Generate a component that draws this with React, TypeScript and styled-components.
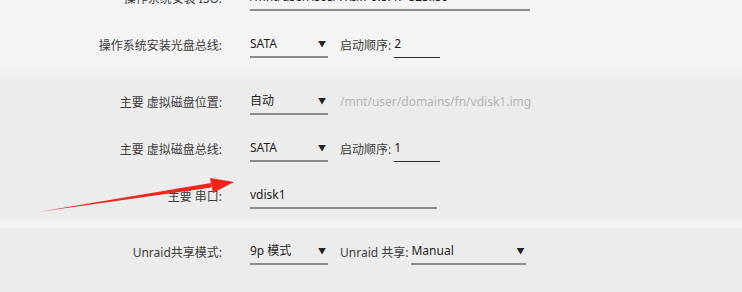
import styled, { createGlobalStyle } from "styled-components";

const GlobalStyle = createGlobalStyle`
  html, body {
    margin: 0;
    padding: 0;
    background: #ececec;
    overflow: hidden;
  }
  body {
    font-family: "Noto Sans", "Noto Sans CJK SC", sans-serif;
    font-size: 12px;
    color: #222;
  }
`;

const Page = styled.div`
  position: relative;
  width: 742px;
  height: 292px;
  overflow: hidden;
`;

const Sheet = styled.div`
  margin-top: -26px;
`;

const Section = styled.div<{ $bg: string }>`
  background: ${(p) => p.$bg};
`;

const Spacer = styled.div<{ $bg: string; $h: number }>`
  height: ${(p) => p.$h}px;
  background: ${(p) => p.$bg};
`;

const Row = styled.div`
  display: grid;
  grid-template-columns: 222px 1fr;
  column-gap: 28px;
  align-items: center;
  height: 47px;
`;

const Label = styled.div<{ $muted?: boolean }>`
  text-align: right;
  color: ${(p) => (p.$muted ? "#b4b4b4" : "#3c3c3c")};
  white-space: nowrap;
`;

const Controls = styled.div`
  display: flex;
  align-items: center;
  gap: 12px;
`;

const Field = styled.div<{ $w: number; $muted?: boolean }>`
  box-sizing: border-box;
  width: ${(p) => p.$w}px;
  height: 26px;
  line-height: 24px;
  border-bottom: 2px solid ${(p) => (p.$muted ? "#d6d6d6" : "#8a8a8a")};
  color: ${(p) => (p.$muted ? "#b4b4b4" : "#1e1e1e")};
  white-space: nowrap;
  overflow: hidden;
`;

const Select = styled(Field)`
  display: flex;
  justify-content: space-between;
  align-items: center;
`;

const Caret = styled.span`
  font-size: 8px;
  color: #222;
  padding-right: 2px;
`;

const Inline = styled.div`
  display: flex;
  align-items: center;
  gap: 3px;
  color: #3c3c3c;
  white-space: nowrap;
`;

const Small = styled.div<{ $w: number }>`
  box-sizing: border-box;
  width: ${(p) => p.$w}px;
  height: 26px;
  line-height: 24px;
  border-bottom: 1px solid #2a2a2a;
  color: #1e1e1e;
`;

const Hint = styled.span`
  color: #b4b4b4;
  white-space: nowrap;
`;

const Arrow = styled.svg`
  position: absolute;
  left: 0;
  top: 0;
  pointer-events: none;
`;

const Dropdown = ({ w, value }: { w: number; value: string }) => (
  <Select $w={w}>
    <span>{value}</span>
    <Caret>▼</Caret>
  </Select>
);

const BootOrder = ({ value }: { value: string }) => (
  <Inline>
    启动顺序:
    <Small $w={46}>{value}</Small>
  </Inline>
);

const App = () => {
  return (
    <>
      <GlobalStyle />
      <Page>
        <Sheet>
          <Section $bg="#f4f4f4">
            <Row>
              <Label>操作系统安装 ISO:</Label>
              <Controls>
                <Field $w={280}>/mnt/user/isos/TRIM-0.8.47-825.iso</Field>
              </Controls>
            </Row>
            <Row>
              <Label>操作系统安装光盘总线:</Label>
              <Controls>
                <Dropdown w={78} value="SATA" />
                <BootOrder value="2" />
              </Controls>
            </Row>
          </Section>
          <Spacer $bg="#f0f0f0" $h={10} />
          <Section $bg="#ececec">
            <Row>
              <Label>主要 虚拟磁盘位置:</Label>
              <Controls>
                <Dropdown w={78} value="自动" />
                <Hint>/mnt/user/domains/fn/vdisk1.img</Hint>
              </Controls>
            </Row>
            <Row>
              <Label>主要 虚拟磁盘总线:</Label>
              <Controls>
                <Dropdown w={78} value="SATA" />
                <BootOrder value="1" />
              </Controls>
            </Row>
            <Row>
              <Label>主要 串口:</Label>
              <Controls>
                <Field $w={187}>vdisk1</Field>
              </Controls>
            </Row>
          </Section>
          <Spacer $bg="#f2f2f2" $h={9} />
          <Section $bg="#ececec">
            <Row>
              <Label>Unraid共享模式:</Label>
              <Controls>
                <Dropdown w={78} value="9p 模式" />
                <Inline>
                  Unraid 共享:
                  <Dropdown w={115} value="Manual" />
                </Inline>
              </Controls>
            </Row>
            <Row>
              <Label $muted>源路径:</Label>
              <Controls>
                <Field $w={187} $muted>
                  /mnt/user/
                </Field>
              </Controls>
            </Row>
          </Section>
        </Sheet>
        <Arrow width="742" height="292" viewBox="0 0 742 292">
          <polygon
            points="38,212 211.6,187.6 211,183 "
            fill="#f3241a"
          />
          <polygon points="234,182 210,178 213,193" fill="#f3241a" />
        </Arrow>
      </Page>
    </>
  );
};

export default App;
